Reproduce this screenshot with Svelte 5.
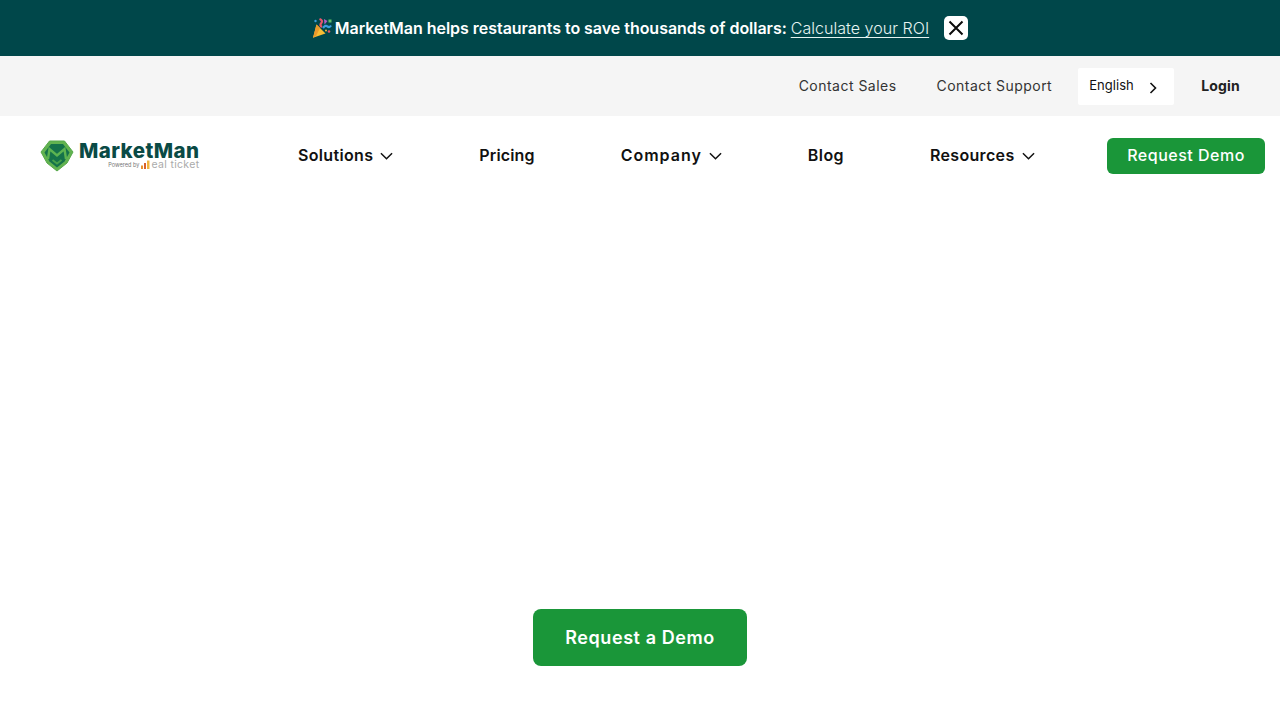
<script>
  const navItems = [
    { label: 'Solutions', caret: true, track: 0.33 },
    { label: 'Pricing', caret: false, track: 0.15 },
    { label: 'Company', caret: true, track: 1 },
    { label: 'Blog', caret: false, track: 0.4 },
    { label: 'Resources', caret: true, track: 0.33 }
  ];
</script>

<div class="page">
  <div class="banner">
    <svg class="popper" viewBox="0 0 20 20" width="20" height="20" aria-hidden="true">
      <path d="M4.5 6.5 L13.5 15.5 L1 19.8 Z" fill="#f7bd34"/>
      <path d="M4.5 6.5 L8 10 L4 18 L1 19.8 Z" fill="#ea9a2c"/>
      <path d="M7.5 1 q4 1.5 1.5 4.5 q-1.5 2 1 3.5" fill="none" stroke="#e5566b" stroke-width="2.2"/>
      <path d="M11 10 q2.5-3.5 4.5-1.5 q2 1.5 3.5-1" fill="none" stroke="#3a9fe0" stroke-width="2.2"/>
      <path d="M12 1 l3.5 2 l-3 3.5 z" fill="#b25fc4"/>
      <path d="M16.5 1.5 h3 v3 h-3 z" fill="#5cc06a"/>
      <circle cx="3.5" cy="3" r="1.2" fill="#3a9fe0"/>
      <circle cx="17" cy="13.5" r="1.3" fill="#e5566b"/>
      <circle cx="14" cy="12.5" r="1" fill="#f7bd34"/>
    </svg>
    <span class="msg">MarketMan helps restaurants to save thousands of dollars:</span>
    <a class="roi" href="#roi">Calculate your ROI</a>
    <button class="close" aria-label="Close">
      <svg viewBox="0 0 24 24" width="24" height="24"><path d="M5.5 5.5 L18.5 18.5 M18.5 5.5 L5.5 18.5" stroke="#0b0b0b" stroke-width="2" fill="none"/></svg>
    </button>
  </div>

  <div class="topbar">
    <a class="sales" href="#sales">Contact Sales</a>
    <a class="support" href="#support">Contact Support</a>
    <div class="lang">
      <span>English</span>
      <svg viewBox="0 0 12 14" width="12" height="14"><path d="M3.5 2 L8.5 7 L3.5 12" stroke="#111" stroke-width="1.6" fill="none"/></svg>
    </div>
    <a class="login" href="#login">Login</a>
  </div>

  <nav class="nav">
    <a class="logo" href="#home">
      <svg viewBox="0 0 34 32" width="34" height="32" aria-hidden="true">
        <path d="M9.5 1 H24.5 L33 12 L27 23 L17 31 L7 23 L1 12 Z" fill="#62b350" stroke="#57a94b" stroke-width="1" stroke-linejoin="round"/>
        <path d="M11 4 H23 L29.5 12.5 L24.5 21.5 L17 27.5 L9.5 21.5 L4.5 12.5 Z" fill="#15724a"/>
        <path d="M8 19 L9.5 9 L17 15.5 L24.5 9 L26 19" fill="none" stroke="#5cb351" stroke-width="2.4" stroke-linejoin="miter"/>
        <path d="M12.5 20 L17 23.5 L21.5 20" fill="none" stroke="#46a04a" stroke-width="1.8"/>
      </svg>
      <span class="logotext">
        <span class="brand">MarketMan</span>
        <span class="powered">
          <small>Powered by</small>
          <svg viewBox="0 0 9 9" width="9" height="9" aria-hidden="true"><path d="M0 9 V5.5 H2 V9 Z" fill="#e8912a"/><path d="M3 9 V3 H5 V9 Z" fill="#d9622b"/><path d="M6 9 V0.5 H8.5 V9 Z" fill="#f0b43c"/></svg>
          <b>eal ticket</b>
        </span>
      </span>
    </a>

    <ul class="menu">
      {#each navItems as item}
        <li>
          <span style="letter-spacing: {item.track}px">{item.label}</span>
          {#if item.caret}
            <svg viewBox="0 0 14 8" width="13" height="8"><path d="M1 1 L7 7 L13 1" stroke="#111" stroke-width="1.6" fill="none"/></svg>
          {/if}
        </li>
      {/each}
    </ul>

    <a class="demo" href="#demo">Request Demo</a>
  </nav>

  <main class="content">
    <a class="cta" href="#cta">Request a Demo</a>
  </main>
</div>

<style>
  :global(body) { margin: 0; background: #fff; }
  .page {
    width: 1280px;
    height: 720px;
    overflow: hidden;
    display: flex;
    flex-direction: column;
    font-family: Inter, "Open Sans", sans-serif;
    color: #111;
  }
  a { text-decoration: none; color: inherit; }

  .banner {
    height: 56px;
    flex: none;
    background: #00474a;
    color: #fff;
    display: flex;
    align-items: center;
    justify-content: center;
    font-size: 16px;
  }
  .popper { margin-right: 3px; }
  .msg { font-weight: 600; letter-spacing: -0.03px; }
  .roi { margin-left: 4px; text-decoration: underline; text-underline-offset: 3px; color: #e6f4f1; letter-spacing: 0.04px; font-weight: 300; }
  .close {
    margin-left: 15px;
    width: 24px;
    height: 24px;
    padding: 0;
    border: 0;
    border-radius: 5px;
    background: #fff;
    display: flex;
  }

  .topbar {
    height: 60px;
    flex: none;
    background: #f5f5f5;
    display: flex;
    align-items: center;
    justify-content: flex-end;
    padding-right: 40px;
    font-size: 14px;
    color: #333;
  }
  .topbar a { position: relative; top: -1px; }
  .sales { margin-right: 40px; letter-spacing: 0.48px; }
  .support { margin-right: 26px; letter-spacing: 0.45px; }
  .topbar .login { margin-left: 27px; font-weight: 700; color: #222; letter-spacing: 0.2px; }
  .lang {
    width: 96px;
    height: 37px;
    box-sizing: border-box;
    padding: 0 15px 0 11px;
    background: #fff;
    border-radius: 2px;
    display: flex;
    align-items: center;
    justify-content: space-between;
    font-size: 13px;
    color: #111;
  }
  .lang span { position: relative; top: -1px; letter-spacing: 0.05px; }
  .lang svg { position: relative; top: 2px; }

  .nav {
    height: 80px;
    flex: none;
    display: flex;
    align-items: flex-start;
    padding-top: 22px;
    box-sizing: border-box;
  }
  .logo {
    margin-left: 40px;
    width: 160px;
    height: 36px;
    display: flex;
    align-items: center;
    gap: 5px;
  }
  .logotext { display: flex; flex-direction: column; line-height: 1; margin-top: -2px; }
  .brand { font-size: 20.5px; font-weight: 800; color: #0a4a45; letter-spacing: 0.42px; }
  .powered { display: flex; align-items: flex-end; justify-content: flex-end; gap: 1px; margin-top: -2px; color: #777; }
  .powered small { font-size: 5.6px; margin-right: 1px; }
  .powered b { font-size: 10.5px; font-weight: 400; color: #aaa; letter-spacing: 0.33px; line-height: 9px; }

  .menu {
    list-style: none;
    margin: -1px 0 0 98px;
    padding: 0;
    height: 36px;
    display: flex;
    align-items: center;
    gap: 86px;
    font-size: 16px;
    font-weight: 600;
    color: #111;
  }
  .menu li { display: flex; align-items: center; gap: 7px; }
  .menu svg { position: relative; top: 1px; }

  .demo {
    margin: 0 15px 0 auto;
    width: 158px;
    height: 36px;
    border-radius: 6px;
    background: #1a9639;
    color: #fff;
    font-size: 16px;
    font-weight: 500;
    letter-spacing: 0.5px;
    display: flex;
    align-items: center;
    justify-content: center;
    padding-bottom: 2px;
    box-sizing: border-box;
  }

  .content {
    flex: 1;
    display: flex;
    justify-content: center;
    align-items: flex-start;
    padding-top: 413px;
  }
  .cta {
    width: 214px;
    height: 57px;
    border-radius: 8px;
    background: #1a9639;
    color: #fff;
    font-size: 18px;
    font-weight: 600;
    letter-spacing: 0.57px;
    display: flex;
    align-items: center;
    justify-content: center;
  }
</style>
